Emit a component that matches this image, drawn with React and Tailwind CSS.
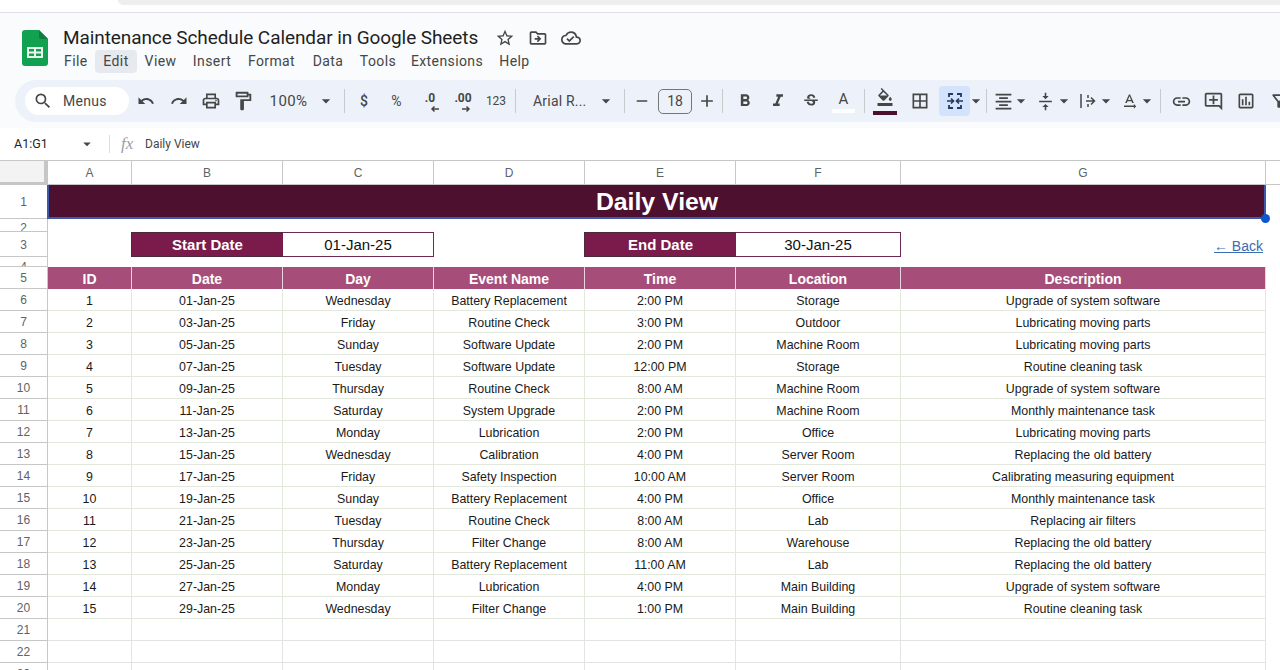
import {
  MdUndo,
  MdRedo,
  MdOutlinePrint,
  MdOutlineFormatPaint,
  MdSearch,
  MdStarBorder,
  MdOutlineDriveFileMove,
  MdOutlineCloudDone,
  MdFormatBold,
  MdFormatItalic,
  MdStrikethroughS,
  MdFormatColorFill,
  MdBorderAll,
  MdFormatAlignCenter,
  MdVerticalAlignCenter,
  MdTextRotationNone,
  MdLink,
  MdOutlineAddComment,
  MdOutlineInsertChart,
  MdOutlineFilterAlt,
  MdArrowDropDown,
  MdAdd,
  MdRemove,
} from "react-icons/md";

const menus = [
  { label: "File", cls: "w-[32px] pl-[1px]" },
  { label: "Edit", cls: "w-[42px] bg-[#e6e9ee] rounded text-center" },
  { label: "View", cls: "w-[47px] text-center" },
  { label: "Insert", cls: "w-[56px] text-center" },
  { label: "Format", cls: "w-[63px] text-center" },
  { label: "Data", cls: "w-[50px] text-center" },
  { label: "Tools", cls: "w-[50px] text-center" },
  { label: "Extensions", cls: "w-[88px] text-center" },
  { label: "Help", cls: "w-[47px] text-center" },
];

const rows = [
  [1, "01-Jan-25", "Wednesday", "Battery Replacement", "2:00 PM", "Storage", "Upgrade of system software"],
  [2, "03-Jan-25", "Friday", "Routine Check", "3:00 PM", "Outdoor", "Lubricating moving parts"],
  [3, "05-Jan-25", "Sunday", "Software Update", "2:00 PM", "Machine Room", "Lubricating moving parts"],
  [4, "07-Jan-25", "Tuesday", "Software Update", "12:00 PM", "Storage", "Routine cleaning task"],
  [5, "09-Jan-25", "Thursday", "Routine Check", "8:00 AM", "Machine Room", "Upgrade of system software"],
  [6, "11-Jan-25", "Saturday", "System Upgrade", "2:00 PM", "Machine Room", "Monthly maintenance task"],
  [7, "13-Jan-25", "Monday", "Lubrication", "2:00 PM", "Office", "Lubricating moving parts"],
  [8, "15-Jan-25", "Wednesday", "Calibration", "4:00 PM", "Server Room", "Replacing the old battery"],
  [9, "17-Jan-25", "Friday", "Safety Inspection", "10:00 AM", "Server Room", "Calibrating measuring equipment"],
  [10, "19-Jan-25", "Sunday", "Battery Replacement", "4:00 PM", "Office", "Monthly maintenance task"],
  [11, "21-Jan-25", "Tuesday", "Routine Check", "8:00 AM", "Lab", "Replacing air filters"],
  [12, "23-Jan-25", "Thursday", "Filter Change", "8:00 AM", "Warehouse", "Replacing the old battery"],
  [13, "25-Jan-25", "Saturday", "Battery Replacement", "11:00 AM", "Lab", "Replacing the old battery"],
  [14, "27-Jan-25", "Monday", "Lubrication", "4:00 PM", "Main Building", "Upgrade of system software"],
  [15, "29-Jan-25", "Wednesday", "Filter Change", "1:00 PM", "Main Building", "Routine cleaning task"],
];

const gridCols = "grid grid-cols-[48px_84px_151px_151px_151px_151px_165px_365px_15px]";

function SheetsLogo() {
  return (
    <svg width="26" height="36" viewBox="0 0 26 36">
      <path d="M3 0h14l9 9v24a3 3 0 0 1-3 3H3a3 3 0 0 1-3-3V3a3 3 0 0 1 3-3z" fill="#12a150" />
      <path d="M17 0l9 9h-7a2 2 0 0 1-2-2z" fill="#0c7f3e" />
      <path d="M5 17h16v11H5z M7 19v2.5h5V19z M14 19v2.5h5V19z M7 23.5V26h5v-2.5z M14 23.5V26h5v-2.5z" fill="#e8f5ec" fillRule="evenodd" />
    </svg>
  );
}

function MergeIcon() {
  return (
    <svg width="18" height="18" viewBox="0 0 18 18" fill="none" stroke="#1f3a5f" strokeWidth="1.8">
      <path d="M3 5V2h4M11 2h4v3M3 13v3h4M11 16h4v-3" />
      <path d="M1 9h6M5 6.5L7.5 9 5 11.5M17 9h-6M13 6.5L10.5 9l2.5 2.5" strokeWidth="1.6" />
    </svg>
  );
}

function WrapIcon() {
  return (
    <svg width="18" height="18" viewBox="0 0 18 18" fill="none" stroke="#444746" strokeWidth="1.5">
      <path d="M2 2v14M7 9h8M12 5.5l3.5 3.5-3.5 3.5" />
      <path d="M9 3v3M9 12v3" />
    </svg>
  );
}

function DecArrow({ left }) {
  return (
    <svg width="10" height="8" viewBox="0 0 10 8" fill="none" stroke="#444746" strokeWidth="1.5">
      {left ? <path d="M9 4H2M4.5 1.5L2 4l2.5 2.5" /> : <path d="M1 4h7M5.5 1.5L8 4 5.5 6.5" />}
    </svg>
  );
}

function Caret({ cls = "w-[14px]" }) {
  return (
    <span className={`${cls} flex justify-center shrink-0`}>
      <MdArrowDropDown size={20} className="text-[#444746] shrink-0" />
    </span>
  );
}

function Sep({ cls = "mx-[9px]" }) {
  return <span className={`${cls} w-px h-[24px] bg-[#c7c9cc] shrink-0`} />;
}

function Tool({ cls, children }) {
  return <span className={`${cls} flex items-center justify-center shrink-0 text-[#444746]`}>{children}</span>;
}

function Toolbar() {
  return (
    <div className="ml-[15px] h-[42px] bg-[#edf2fa] rounded-l-[21px] flex items-center pl-[10px] overflow-hidden whitespace-nowrap">
      <div className="w-[104px] h-[28px] bg-white rounded-[14px] flex items-center pl-[8px] gap-[10px] text-[#444746] shrink-0">
        <MdSearch size={20} />
        <span className="text-[14px] tracking-[0.3px]">Menus</span>
      </div>
      <Tool cls="w-[33px]"><MdUndo size={18} /></Tool>
      <Tool cls="w-[33px]"><MdRedo size={18} /></Tool>
      <Tool cls="w-[32px]"><MdOutlinePrint size={20} /></Tool>
      <Tool cls="w-[32px]"><MdOutlineFormatPaint size={22} /></Tool>
      <Tool cls="w-[59px] text-[15px] tracking-[0.4px]">100%</Tool>
      <Caret cls="w-[16px]" />
      <Sep cls="ml-[10px] mr-[9px]" />
      <Tool cls="w-[20px] text-[14px] font-medium">$</Tool>
      <Tool cls="w-[45px] text-[14px]">%</Tool>
      <Tool cls="w-[22px] text-[12px] font-bold relative">
        <span className="-mt-[6px]">.0</span>
        <span className="absolute left-[11px] top-[10px]"><DecArrow left /></span>
      </Tool>
      <Tool cls="w-[44px] text-[12px] font-bold relative">
        <span className="-mt-[6px]">.00</span>
        <span className="absolute left-[20px] top-[10px]"><DecArrow /></span>
      </Tool>
      <Tool cls="w-[22px] text-[12px]">123</Tool>
      <Sep cls="ml-[8px] mr-[17px]" />
      <span className="w-[60px] text-[14px] text-[#444746] shrink-0 tracking-[0.2px]">Arial R...</span>
      <Caret cls="w-[16px] ml-[5px]" />
      <Sep cls="ml-[10px] mr-[8px]" />
      <Tool cls="w-[18px]"><MdRemove size={18} /></Tool>
      <span className="w-[34px] h-[25px] ml-[7px] border border-[#747775] rounded-[5px] flex items-center justify-center text-[14px] text-[#444746] shrink-0">18</span>
      <Tool cls="w-[30px]"><MdAdd size={20} /></Tool>
      <Sep cls="mr-[5px]" />
      <Tool cls="w-[33px]"><MdFormatBold size={20} /></Tool>
      <Tool cls="w-[33px]"><MdFormatItalic size={20} /></Tool>
      <Tool cls="w-[33px]"><MdStrikethroughS size={18} /></Tool>
      <Tool cls="w-[33px] relative">
        <span className="text-[15px] -mt-[4px]">A</span>
        <span className="absolute left-[5px] top-[17px] w-[23px] h-[4px] bg-white" />
      </Tool>
      <Sep cls="ml-[4px] mr-[4px]" />
      <Tool cls="w-[32px] relative">
        <MdFormatColorFill size={18} className="-mt-[8px]" />
        <span className="absolute left-[4px] top-[15px] w-[24px] h-[4px] bg-[#4c0f2e]" />
      </Tool>
      <Tool cls="w-[38px]"><MdBorderAll size={20} /></Tool>
      <Tool cls="w-[31px] h-[30px] bg-[#d3e3fd] rounded"><MergeIcon /></Tool>
      <Caret cls="w-[12px]" />
      <Sep cls="ml-[4px] mr-[4px]" />
      <Tool cls="w-[24px]"><MdFormatAlignCenter size={21} /></Tool>
      <Caret cls="w-[12px]" />
      <Tool cls="w-[26px] ml-[5px]"><MdVerticalAlignCenter size={19} /></Tool>
      <Caret cls="w-[12px]" />
      <Tool cls="w-[24px] ml-[6px]"><WrapIcon /></Tool>
      <Caret cls="w-[12px]" />
      <Tool cls="w-[24px] ml-[5px]"><MdTextRotationNone size={19} /></Tool>
      <Caret cls="w-[12px]" />
      <Sep cls="ml-[7px] mr-[7px]" />
      <Tool cls="w-[26px]"><MdLink size={21} /></Tool>
      <Tool cls="w-[32px] ml-[3px]"><MdOutlineAddComment size={21} /></Tool>
      <Tool cls="w-[34px]"><MdOutlineInsertChart size={20} /></Tool>
      <Tool cls="w-[30px] ml-[1px]"><MdOutlineFilterAlt size={20} /></Tool>
    </div>
  );
}

function RowNum({ n, cls = "items-center pt-[1px]" }) {
  return (
    <div className={`${cls} border-r border-b border-[#c7c7c7] flex justify-center overflow-hidden text-[12px] leading-[14px] text-[#5f6368] bg-white`}>
      {n}
    </div>
  );
}

function ColHeaders() {
  const letters = ["A", "B", "C", "D", "E", "F", "G"];
  return (
    <div className={`${gridCols} h-[25px] border-t border-[#c7c7c7] bg-white`}>
      <div className="bg-[#f3f3f3] border-r-[4px] border-b-[3px] border-[#c4c7c5]" />
      {letters.map((l) => (
        <div key={l} className="border-r border-b border-[#c7c7c7] flex items-center justify-center text-[12px] text-[#5f6368]">
          {l}
        </div>
      ))}
      <div className="border-b border-[#c7c7c7]" />
    </div>
  );
}

function DateBox({ label, value }) {
  return (
    <>
      <div className="-ml-px bg-[#7a1b4b] border-l border-y border-[#4c2a3c] flex items-center justify-center text-white font-bold text-[15px] leading-[18px]">
        {label}
      </div>
      <div className="border-y border-r border-[#6b2a55] flex items-center justify-center text-[15px] leading-[18px] text-[#111]">
        {value}
      </div>
    </>
  );
}

export default function App() {
  const headers = ["ID", "Date", "Day", "Event Name", "Time", "Location", "Description"];

  return (
    <div className="w-[1280px] h-[670px] overflow-hidden bg-white font-['Roboto',sans-serif]">
      {/* browser edge */}
      <div className="h-[13px] bg-white border-b border-[#dfe1e5]">
        <div className="ml-[118px] h-[5px] bg-[#eeeeee] rounded-bl-lg" />
      </div>

      {/* docs header */}
      <div className="bg-[#f9fbfd] h-[115px]">
        <div className="flex h-[60px]">
          <div className="w-[63px] pl-[22px] pt-[17px] shrink-0">
            <SheetsLogo />
          </div>
          <div className="flex flex-col">
            <div className="h-[24px] mt-[13px] flex items-center">
              <span className="text-[19px] tracking-[-0.09px] text-[#1f1f1f] w-[432px] whitespace-nowrap">Maintenance Schedule Calendar in Google Sheets</span>
              <MdStarBorder size={20} className="text-[#444746]" />
              <MdOutlineDriveFileMove size={20} className="text-[#444746] ml-[13px]" />
              <MdOutlineCloudDone size={20} className="text-[#444746] ml-[13px]" />
            </div>
            <div className="flex items-center h-[23px] text-[14px] text-[#444746] tracking-[0.4px]">
              {menus.map((m) => (
                <span key={m.label} className={`${m.cls} h-[23px] leading-[23px] shrink-0`}>{m.label}</span>
              ))}
            </div>
          </div>
        </div>
        <div className="mt-[7px]">
          <Toolbar />
        </div>
      </div>

      {/* formula bar */}
      <div className="h-[32px] bg-white flex items-center">
        <span className="w-[78px] pl-[14px] text-[12.5px] text-[#1f1f1f] shrink-0">A1:G1</span>
        <MdArrowDropDown size={18} className="text-[#444746] shrink-0" />
        <span className="ml-[13px] w-px h-[18px] bg-[#dadce0] shrink-0" />
        <span className="ml-[11px] w-[24px] text-[17px] italic text-[#9aa0a6] font-['Liberation_Serif',serif] shrink-0">fx</span>
        <span className="text-[12px] text-[#444746]">Daily View</span>
      </div>

      {/* sheet */}
      <div className="font-['Liberation_Sans',sans-serif]">
        <ColHeaders />

        <div className={`${gridCols} h-[34px] relative`}>
          <RowNum n={1} />
          <div className="col-span-7 bg-[#4d102f] flex items-center justify-center text-white font-bold text-[24.8px] leading-none">
            Daily View
          </div>
          <div className="absolute left-[47px] top-0 w-[1219px] h-[34px] border-x-2 border-b-2 border-[#3d59ad]" />
          <div className="absolute left-[1261px] top-[29px] w-[9px] h-[9px] rounded-full bg-[#0b57d0]" />
        </div>

        <div className={`${gridCols} h-[13px]`}>
          <RowNum n={2} cls="items-start pt-[2px]" />
        </div>

        <div className={`${gridCols} h-[25px]`}>
          <RowNum n={3} />
          <div />
          <DateBox label="Start Date" value="01-Jan-25" />
          <div />
          <DateBox label="End Date" value="30-Jan-25" />
          <div className="flex items-center justify-end pr-[3px] pt-[3px] text-[14px] leading-[18px] text-[#3d6bb3] underline">← Back</div>
        </div>

        <div className={`${gridCols} h-[10px]`}>
          <RowNum n={4} cls="items-start pt-[3px]" />
        </div>

        <div className={`${gridCols} h-[22px]`}>
          <RowNum n={5} />
          {headers.map((h) => (
            <div key={h} className="bg-[#a64d79] border-r border-[#e8d5df] flex items-center justify-center pt-[2px] text-white font-bold text-[14px] leading-[16px]">
              {h}
            </div>
          ))}
        </div>

        {rows.map((r, i) => (
          <div key={r[0]} className={`${gridCols} h-[22px]`}>
            <RowNum n={i + 6} />
            {r.map((c, j) => (
              <div key={j} className="border-r border-b border-[#e3e8dc] flex items-center justify-center pt-[3px] text-[12.4px] leading-[16px] text-[#1a1a1a] whitespace-nowrap">
                {c}
              </div>
            ))}
          </div>
        ))}

        {[21, 22, 23].map((n) => (
          <div key={n} className={`${gridCols} h-[22px]`}>
            <RowNum n={n} />
            {[0, 1, 2, 3, 4, 5, 6].map((c) => (
              <div key={c} className="border-r border-b border-[#e2e3e3]" />
            ))}
          </div>
        ))}
      </div>
    </div>
  );
}
